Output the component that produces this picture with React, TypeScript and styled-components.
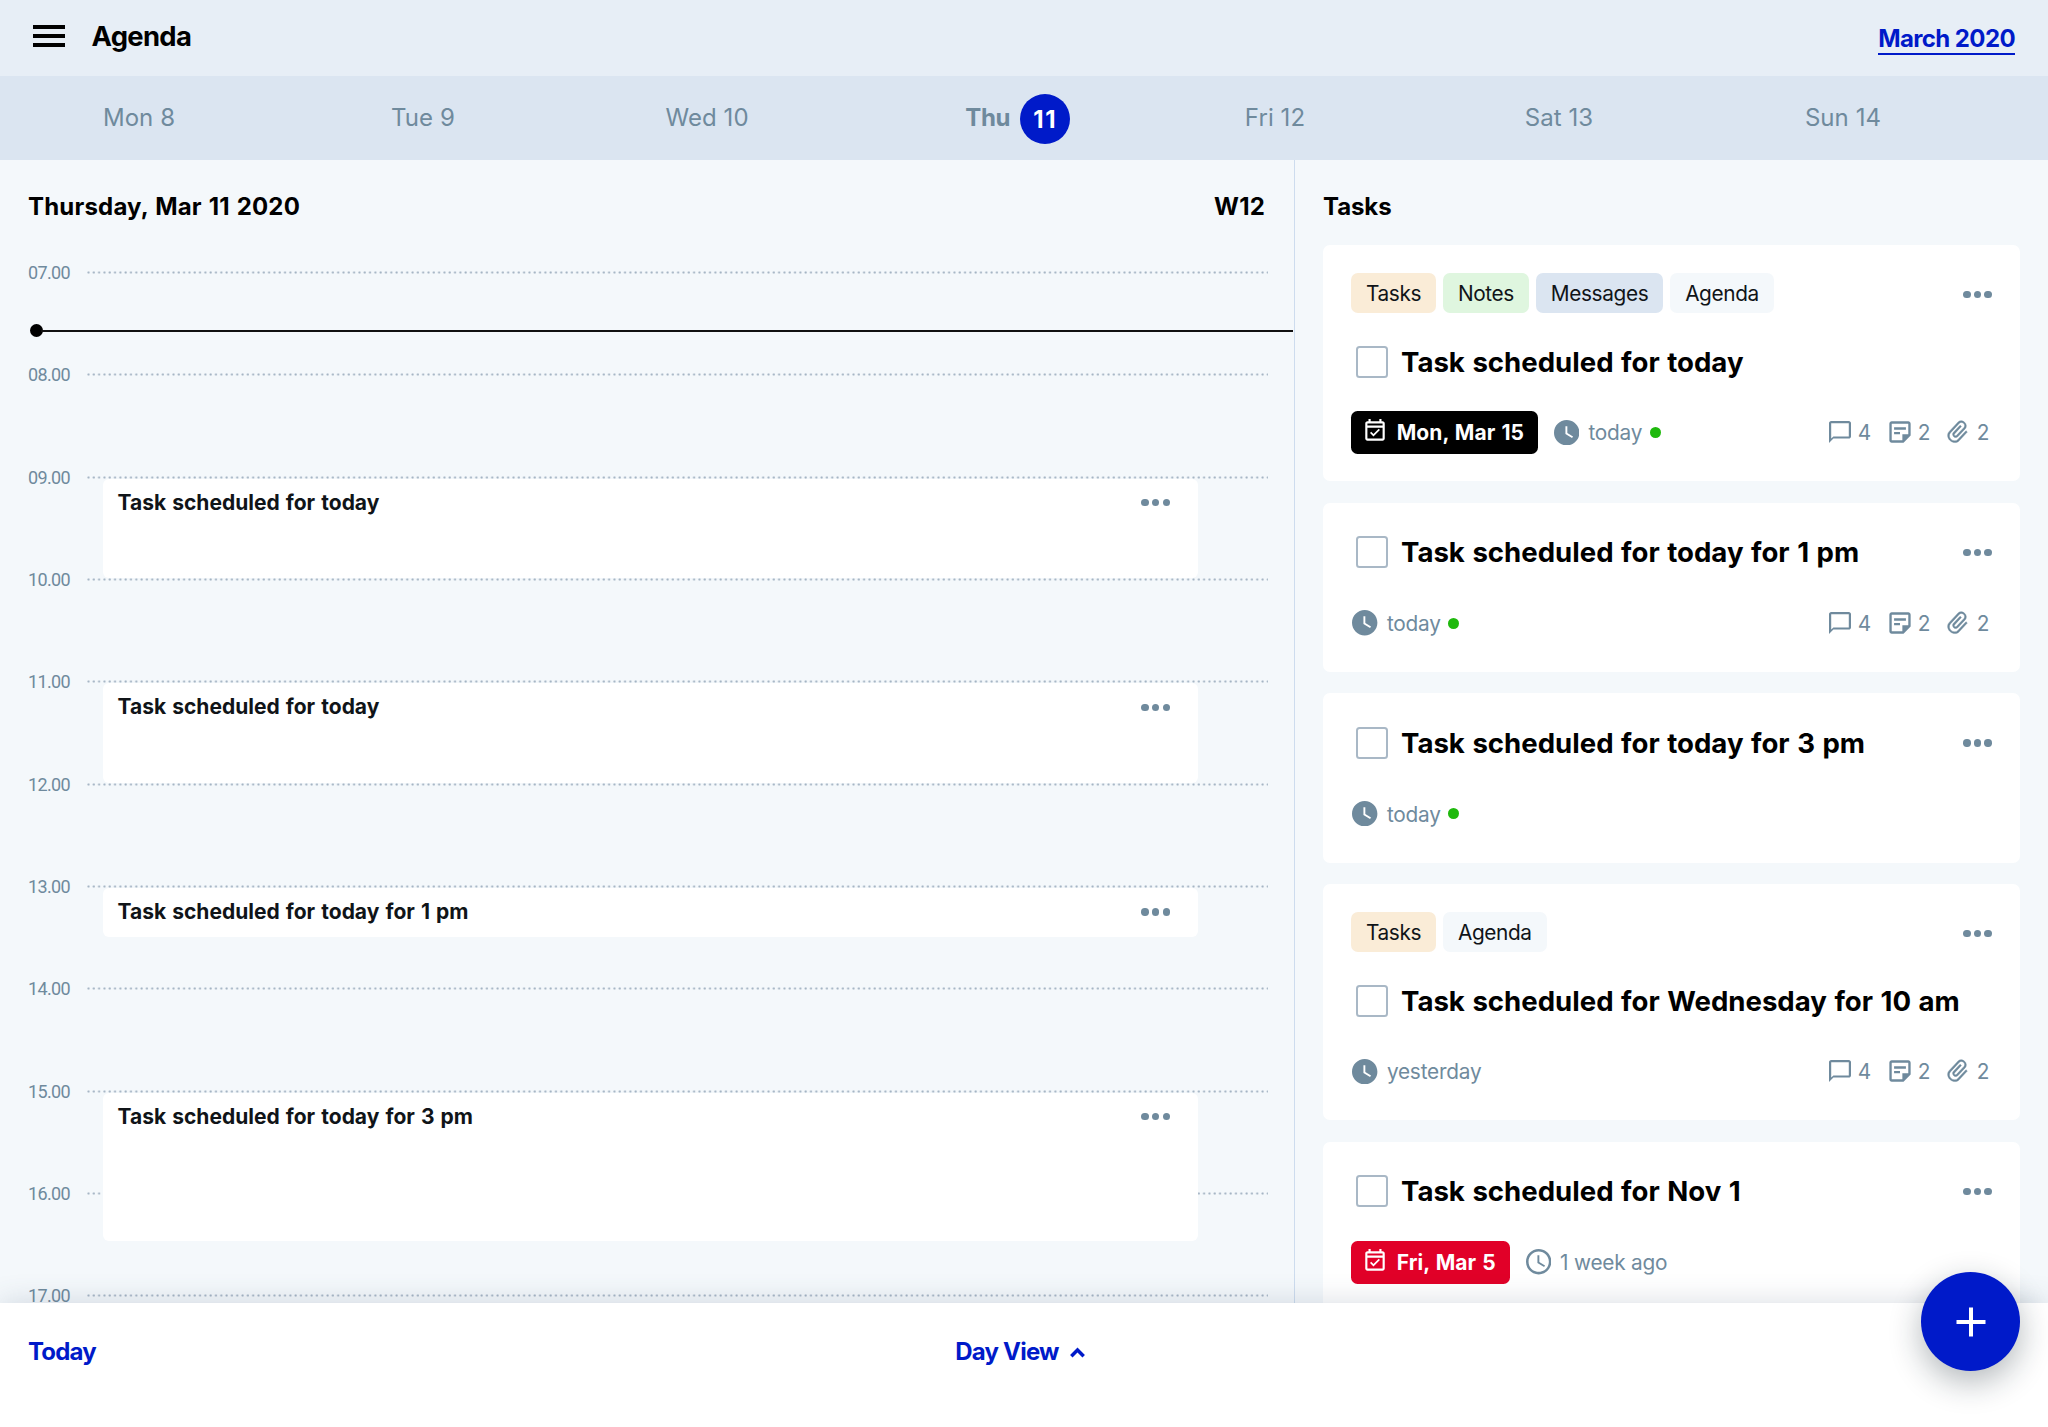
import React from "react";
import styled, { createGlobalStyle } from "styled-components";

const BLUE = "#001ac9";
const SLATE = "#6f8a9d";

const GlobalStyle = createGlobalStyle`
  * { box-sizing: border-box; }
  html, body { margin: 0; padding: 0; }
  body { font-family: Inter, "Liberation Sans", sans-serif; color: #000; overflow: hidden; }
  button { font: inherit; letter-spacing: inherit; border: 0; padding: 0; background: none; color: inherit; display: block; }
  svg { display: block; flex: none; }
`;

const Screen = styled.div`
  position: relative;
  display: flex;
  flex-direction: column;
  width: 2048px;
  height: 1427px;
  overflow: hidden;
  background: #f4f8fb;
`;

const TopBar = styled.header`
  display: flex;
  align-items: center;
  flex: none;
  height: 75.5px;
  padding: 0 33px 4px 33px;
  background: #e7eef6;
`;

const MenuButton = styled.button`
  display: flex;
  flex-direction: column;
  gap: 5px;
  width: 32px;
  margin-right: 26.5px;
  padding-top: 1px;
`;

const MenuBar = styled.span`
  height: 4px;
  background: #000;
`;

const ScreenTitle = styled.h1`
  flex: 1;
  margin: 0;
  font-size: 27.4px;
  font-weight: 700;
  letter-spacing: -0.024em;
  line-height: 36px;
`;

const MonthLink = styled.a`
  margin-top: 8px;
  padding-bottom: 0.5px;
  border-bottom: 2.6px solid ${BLUE};
  color: ${BLUE};
  font-size: 24px;
  font-weight: 700;
  letter-spacing: -0.025em;
  line-height: 27px;
`;

const WeekBar = styled.nav`
  display: grid;
  grid-template-columns: repeat(7, 284px);
  align-items: center;
  flex: none;
  height: 84.5px;
  background: #dbe5f1;
`;

const Day = styled.div<{ $current?: boolean }>`
  display: flex;
  justify-content: center;
  align-items: center;
  gap: 10px;
  padding-left: ${(p) => (p.$current ? "47.5px" : "0")};
  padding-right: ${(p) => (p.$current ? "0" : "6px")};
  color: ${SLATE};
  font-size: 24px;
  font-weight: ${(p) => (p.$current ? 700 : 400)};
  letter-spacing: ${(p) => (p.$current ? "-0.015em" : "0.003em")};
  line-height: 50px;
`;

const DayDisc = styled.span`
  width: 50px;
  height: 50px;
  margin: 3px 0 0;
  border-radius: 50%;
  background: ${BLUE};
  color: #fff;
  letter-spacing: 0.06em;
  line-height: 51px;
  text-align: center;
`;

const Body = styled.main`
  display: flex;
  flex: 1;
  min-height: 0;
  overflow: hidden;
`;

const DayPane = styled.section`
  flex: none;
  width: 1295px;
  border-right: 1px solid #cddcee;
`;

const PaneHeading = styled.div`
  display: flex;
  justify-content: space-between;
  padding: 31.5px 29px 0 28px;
  font-size: 24px;
  font-weight: 700;
  letter-spacing: 0.008em;
  word-spacing: 1px;
  line-height: 30px;
`;

const Timeline = styled.div`
  position: relative;
`;

const HourRow = styled.div`
  display: flex;
  align-items: center;
  height: 102.32px;
  padding: 0 26px 0 28px;
`;

const HourLabel = styled.span`
  width: 59px;
  color: ${SLATE};
  font-family: Roboto, "Liberation Sans", sans-serif;
  font-size: 18px;
  letter-spacing: -0.035em;
  line-height: 22px;
  padding-top: 1px;
`;

const HourLine = styled.span`
  flex: 1;
  height: 3px;
  background: radial-gradient(circle at 1.5px 1.5px, #a3b3c3 0.5px, rgba(163, 179, 195, 0) 1.6px) 0 0 / 5.324px 3px repeat-x;
`;

const NowMarker = styled.div`
  position: absolute;
  top: 102.8px;
  left: 29.5px;
  right: 1px;
  display: flex;
  align-items: center;
  height: 13px;
`;

const NowDot = styled.span`
  width: 13px;
  height: 13px;
  border-radius: 50%;
  background: #000;
`;

const NowLine = styled.span`
  flex: 1;
  height: 2px;
  margin-left: -2px;
  background: #111;
`;

const EventCard = styled.article`
  position: absolute;
  left: 103px;
  right: 96.5px;
  display: flex;
  justify-content: space-between;
  align-items: flex-start;
  padding: 9px 27.5px 0 14.5px;
  border-radius: 6px;
  background: #fff;
  color: #101418;
  font-size: 21px;
  font-weight: 700;
  letter-spacing: 0;
  word-spacing: 1.15px;
  line-height: 30px;
`;

const CardTitle = styled.h3`
  flex: 1;
  margin: 0;
  font-size: 27.6px;
  font-weight: 700;
  letter-spacing: 0;
  word-spacing: 1px;
  line-height: 40px;
  white-space: nowrap;
`;

const MoreButton = styled.button<{ $low?: boolean }>`
  display: flex;
  gap: 3.2px;
  height: 30px;
  align-items: center;
  padding-top: ${(p) => (p.$low ? "3px" : "0")};
`;

const MoreDot = styled.span`
  width: 7.4px;
  height: 7.4px;
  border-radius: 50%;
  background: ${SLATE};
`;

const TaskPane = styled.section`
  flex: 1;
  padding-right: 28px;
`;

const TaskHeading = styled(PaneHeading)`
  padding-left: 28px;
  letter-spacing: -0.004em;
`;

const TaskList = styled.div`
  display: flex;
  flex-direction: column;
  gap: 21.35px;
  padding: 23.5px 0 0 28.3px;
`;

const Card = styled.article`
  padding: 28px 28.3px 27.4px 27.7px;
  border-radius: 7px;
  background: #fff;
`;

const TagRow = styled.div`
  display: flex;
  align-items: center;
  gap: 6.9px;
  height: 39.6px;
  margin-bottom: 27.6px;
`;

const Tag = styled.span<{ $tone: string }>`
  height: 39.6px;
  padding: 0 15px;
  border-radius: 7px;
  background: ${(p) => p.$tone};
  color: #101418;
  font-size: 20.8px;
  letter-spacing: -0.018em;
  line-height: 41.6px;
`;

const Spacer = styled.span`
  flex: 1;
`;

const TitleRow = styled.div`
  display: flex;
  align-items: center;
  height: 43.2px;
`;

const Checkbox = styled.span`
  width: 32px;
  height: 32px;
  margin: 0 13px 0 5px;
  border: 2px solid #a9b8c6;
  border-radius: 3.5px;
`;

const MetaRow = styled.div`
  display: flex;
  align-items: center;
  height: 43.2px;
  margin-top: 27.5px;
  color: ${SLATE};
  font-size: 20.8px;
  letter-spacing: -0.01em;
  line-height: 30px;
`;

const Label = styled.span`
  padding-top: 1.8px;
`;

const DateBadge = styled.span<{ $overdue?: boolean }>`
  display: flex;
  align-items: center;
  gap: 9px;
  height: 43.2px;
  margin-right: 14.5px;
  padding: 0 14px 0 10.7px;
  border-radius: 6.5px;
  background: ${(p) => (p.$overdue ? "#e10028" : "#000")};
  color: #fff;
  font-size: 21px;
  font-weight: 700;
  letter-spacing: 0.003em;
  word-spacing: 1px;
  svg { margin-top: -2.5px; }
`;

const When = styled.span`
  display: flex;
  align-items: center;
  gap: 9px;
  margin-left: 1.5px;
`;

const StatusDot = styled.i`
  width: 11px;
  height: 11px;
  margin-left: -1.5px;
  background: #1fb90d;
  border-radius: 50%;
`;

const Stats = styled.div`
  display: grid;
  grid-template-columns: 60px 59px 44px;
  margin-left: auto;
`;

const Stat = styled.span`
  display: flex;
  align-items: center;
  gap: 7px;
`;

const BottomBar = styled.footer`
  position: relative;
  display: grid;
  grid-template-columns: 1fr auto 1fr;
  flex: none;
  height: 124.3px;
  padding: 34.6px 28px 0;
  background: #fff;
  box-shadow: 0 0 28px rgba(60, 80, 110, 0.2);
  color: ${BLUE};
  font-size: 24px;
  font-weight: 700;
  letter-spacing: -0.033em;
  line-height: 30px;
`;

const ViewSwitch = styled.button`
  display: flex;
  align-items: center;
  gap: 11px;
  height: 30px;
  margin-right: 8px;
`;

const AddButton = styled.button`
  position: absolute;
  right: 28px;
  bottom: 56px;
  display: grid !important;
  place-items: center;
  width: 99px;
  height: 99px;
  border-radius: 50%;
  background: ${BLUE};
  box-shadow: 0 11px 32px rgba(20, 35, 45, 0.32);
`;

const ClipSvg = styled.svg`
  margin: 0 -1px 0 -3px;
  transform: rotate(43deg) scale(1.14, 0.98);
`;

const glyphs = {
  chat: "M20 2H4c-1.1 0-2 .9-2 2v18l4-4h14c1.1 0 2-.9 2-2V4c0-1.1-.9-2-2-2zm0 14H6l-2 2V4h16v12z",
  note: "M19,5v9l-5,0l0,5H5V5H19 M19,3H5C3.9,3,3,3.9,3,5v14c0,1.1,0.9,2,2,2h10l6-6V5C21,3.9,20.1,3,19,3z M12,14H7v-2h5V14z M17,10H7V8h10V10z",
  calendar:
    "M16.53 11.06L15.47 10l-4.88 4.88-2.12-2.12-1.06 1.06L10.59 17l5.94-5.94zM19 3h-1V1h-2v2H8V1H6v2H5c-1.11 0-1.99.9-1.99 2L3 19c0 1.1.89 2 2 2h14c1.1 0 2-.9 2-2V5c0-1.1-.9-2-2-2zm0 2v2H5V5h14zM5 19V9h14v10H5z",
  clock: "M12 2C6.5 2 2 6.5 2 12s4.5 10 10 10 10-4.5 10-10S17.5 2 12 2zm4.2 14.2L11 13V7h1.5v5.2l4.5 2.7-.8 1.3z",
  clockOutline:
    "M11.99 2C6.47 2 2 6.48 2 12s4.47 10 9.99 10C17.52 22 22 17.52 22 12S17.52 2 11.99 2zM12 20c-4.42 0-8-3.58-8-8s3.58-8 8-8 8 3.58 8 8-3.58 8-8 8zm.5-13H11v6l5.25 3.15.75-1.23-4.5-2.67z",
  clip: "M16.5 6v11.5c0 2.21-1.79 4-4 4s-4-1.79-4-4V5c0-1.38 1.12-2.5 2.5-2.5s2.5 1.12 2.5 2.5v10.5c0 .55-.45 1-1 1s-1-.45-1-1V6H10v9.5c0 1.38 1.12 2.5 2.5 2.5s2.5-1.12 2.5-2.5V5c0-2.21-1.79-4-4-4S7 2.79 7 5v12.5c0 3.04 2.46 5.5 5.5 5.5s5.5-2.46 5.5-5.5V6h-1.5z",
};

const Glyph = ({ name, size, box = "0 0 24 24" }: { name: keyof typeof glyphs; size: number; box?: string }) => (
  <svg width={size} height={size} viewBox={box} fill="currentColor" fillRule="evenodd">
    <path d={glyphs[name]} />
  </svg>
);

const ClipIcon = () => (
  <ClipSvg width="26" height="26" viewBox="0.5 0 24 24" fill="currentColor" stroke="currentColor" strokeWidth="0.35">
    <path d={glyphs.clip} />
  </ClipSvg>
);

const More = ({ low }: { low?: boolean }) => (
  <MoreButton aria-label="More" $low={low}>
    <MoreDot />
    <MoreDot />
    <MoreDot />
  </MoreButton>
);

const HOUR = 102.32;
const hours = [7, 8, 9, 10, 11, 12, 13, 14, 15, 16, 17];

const events = [
  { title: "Task scheduled for today", start: 9, length: 1 },
  { title: "Task scheduled for today", start: 11, length: 1 },
  { title: "Task scheduled for today for 1 pm", start: 13, length: 0.51 },
  { title: "Task scheduled for today for 3 pm", start: 15, length: 1.475 },
];

const tones: Record<string, string> = {
  Tasks: "#faecd7",
  Notes: "#dff6df",
  Messages: "#dbe5f1",
  Agenda: "#f4f8fb",
};

type Task = {
  title: string;
  tags?: string[];
  due?: string;
  overdue?: boolean;
  when: string;
  live?: boolean;
  stats?: [number, number, number];
};

const tasks: Task[] = [
  { title: "Task scheduled for today", tags: ["Tasks", "Notes", "Messages", "Agenda"], due: "Mon, Mar 15", when: "today", live: true, stats: [4, 2, 2] },
  { title: "Task scheduled for today for 1 pm", when: "today", live: true, stats: [4, 2, 2] },
  { title: "Task scheduled for today for 3 pm", when: "today", live: true },
  { title: "Task scheduled for Wednesday for 10 am", tags: ["Tasks", "Agenda"], when: "yesterday", stats: [4, 2, 2] },
  { title: "Task scheduled for Nov 1", due: "Fri, Mar 5", overdue: true, when: "1 week ago" },
];

const TaskCard = ({ task }: { task: Task }) => (
  <Card>
    {task.tags && (
      <TagRow>
        {task.tags.map((t) => (
          <Tag key={t} $tone={tones[t]}>{t}</Tag>
        ))}
        <Spacer />
        <More low />
      </TagRow>
    )}
    <TitleRow>
      <Checkbox />
      <CardTitle>{task.title}</CardTitle>
      {!task.tags && <More />}
    </TitleRow>
    <MetaRow>
      {task.due && (
        <DateBadge $overdue={task.overdue}>
          <Glyph name="calendar" size={26} />
          <Label>{task.due}</Label>
        </DateBadge>
      )}
      <When>
        <Glyph name={task.overdue ? "clockOutline" : "clock"} size={25.4} box="2 2 20 20" />
        <Label>{task.when}</Label>
        {task.live && <StatusDot />}
      </When>
      {task.stats && (
        <Stats>
          <Stat><Glyph name="chat" size={22} box="2 2 20 20" /><Label>{task.stats[0]}</Label></Stat>
          <Stat><Glyph name="note" size={22} box="2.7 2.7 18.6 18.6" /><Label>{task.stats[1]}</Label></Stat>
          <Stat><ClipIcon /><Label>{task.stats[2]}</Label></Stat>
        </Stats>
      )}
    </MetaRow>
  </Card>
);

export default function App() {
  return (
    <Screen>
      <GlobalStyle />
      <TopBar>
        <MenuButton aria-label="Menu">
          <MenuBar />
          <MenuBar />
          <MenuBar />
        </MenuButton>
        <ScreenTitle>Agenda</ScreenTitle>
        <MonthLink>March 2020</MonthLink>
      </TopBar>
      <WeekBar>
        <Day>Mon 8</Day>
        <Day>Tue 9</Day>
        <Day>Wed 10</Day>
        <Day $current>Thu<DayDisc>11</DayDisc></Day>
        <Day>Fri 12</Day>
        <Day>Sat 13</Day>
        <Day>Sun 14</Day>
      </WeekBar>
      <Body>
        <DayPane>
          <PaneHeading>
            <span>Thursday, Mar 11 2020</span>
            <span>W12</span>
          </PaneHeading>
          <Timeline>
            {hours.map((h) => (
              <HourRow key={h}>
                <HourLabel>{String(h).padStart(2, "0")}.00</HourLabel>
                <HourLine />
              </HourRow>
            ))}
            {events.map((e) => (
              <EventCard key={e.start} style={{ top: (e.start - 6.5) * HOUR + 1.5, height: e.length * HOUR - 3 }}>
                {e.title}
                <More />
              </EventCard>
            ))}
            <NowMarker>
              <NowDot />
              <NowLine />
            </NowMarker>
          </Timeline>
        </DayPane>
        <TaskPane>
          <TaskHeading>Tasks</TaskHeading>
          <TaskList>
            {tasks.map((t) => (
              <TaskCard key={t.title} task={t} />
            ))}
          </TaskList>
        </TaskPane>
      </Body>
      <BottomBar>
        <span>Today</span>
        <ViewSwitch>
          Day View
          <svg width="15" height="11" viewBox="0 0 15 11" fill="none" stroke="currentColor" strokeWidth="3.5">
            <path d="M1.3 9.2 L7.5 3 L13.7 9.2" />
          </svg>
        </ViewSwitch>
      </BottomBar>
      <AddButton aria-label="Add">
        <svg width="30" height="30" viewBox="0 0 30 30" stroke="#fff" strokeWidth="4">
          <path d="M15 0.5V29.5M0.5 15H29.5" />
        </svg>
      </AddButton>
    </Screen>
  );
}
